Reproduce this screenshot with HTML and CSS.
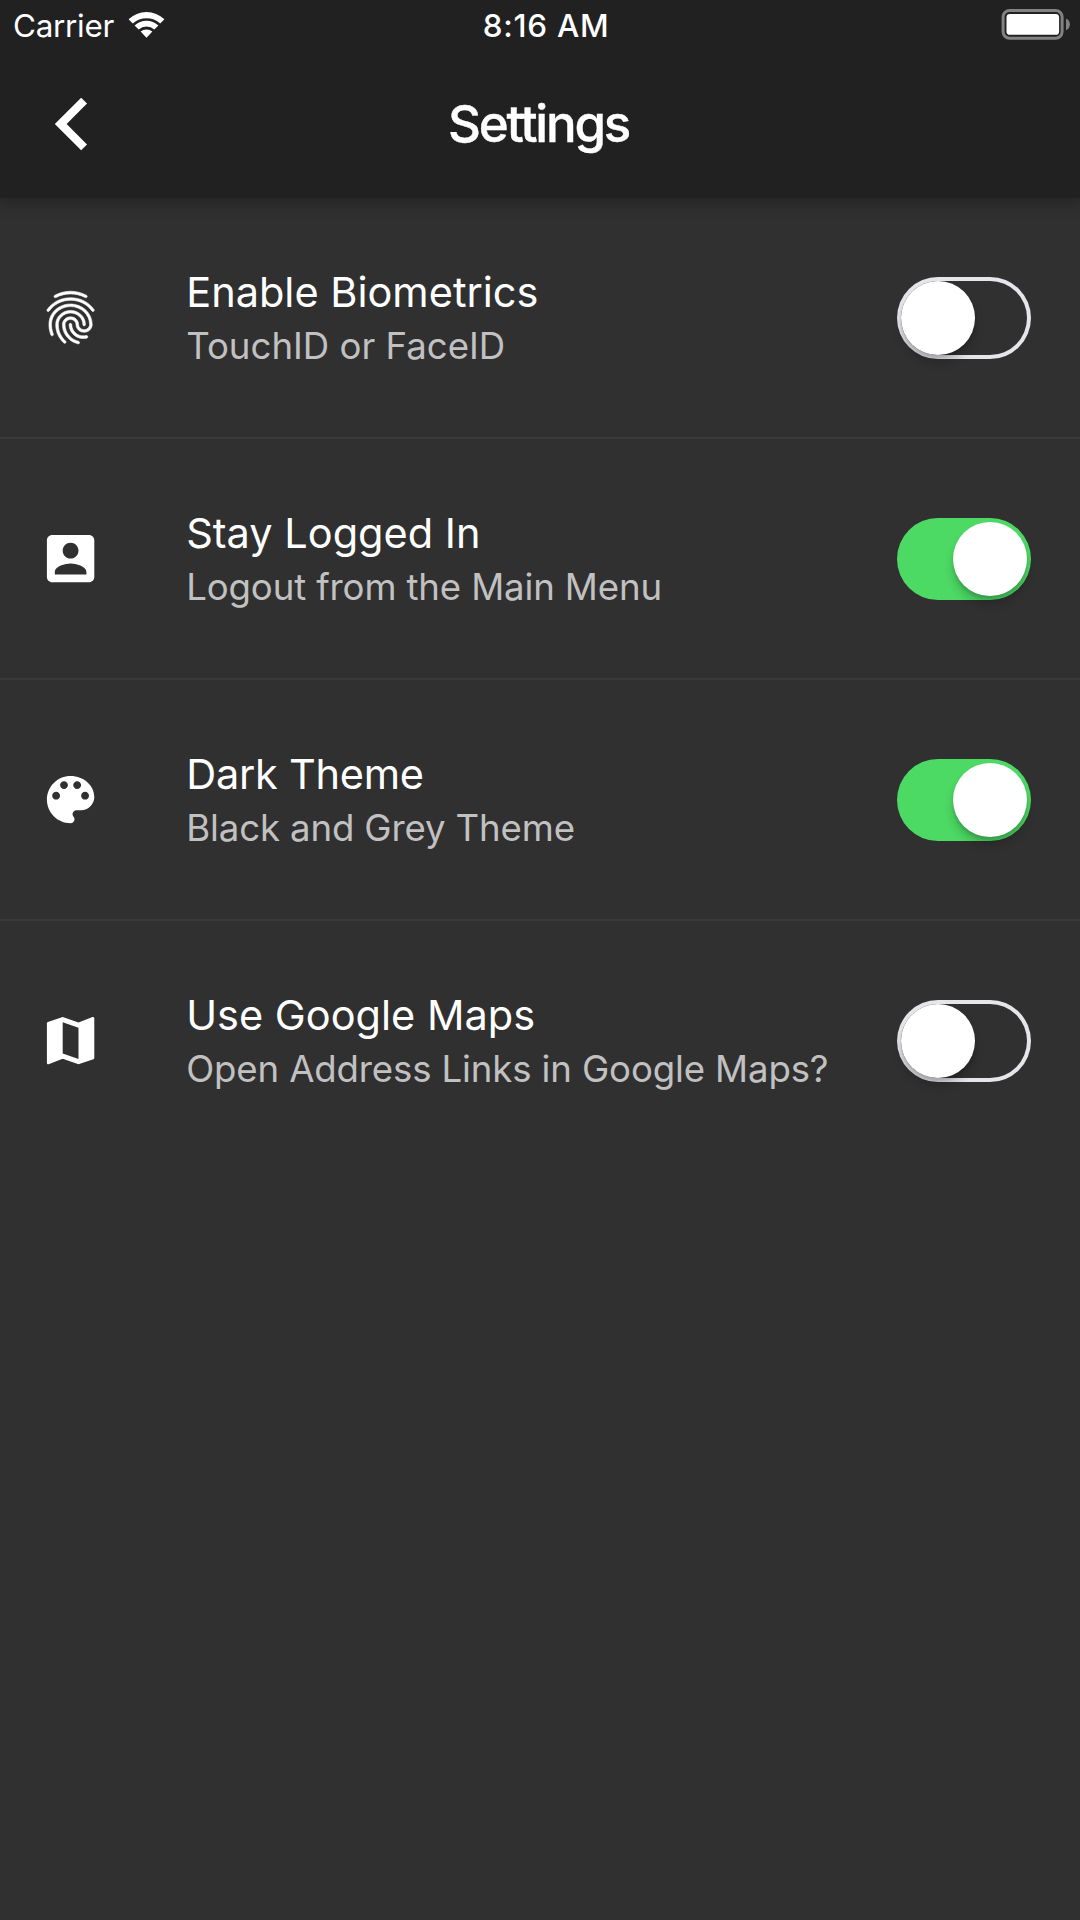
FILE: index.html
```html
<!DOCTYPE html>
<html lang="en">
<head>
<meta charset="utf-8">
<title>Settings</title>
<link rel="stylesheet" href="styles.css">
</head>
<body>
<header class="app-bar">
  <div class="status-bar">
    <div class="status-left">
      <span class="carrier">Carrier</span>
      <svg class="wifi" viewBox="0 0 37 28"><path d="M0.6 8.2A26 26 0 0 1 36.4 8.2L32.2 12.6A20 20 0 0 0 4.8 12.6ZM6.6 14.4A17.4 17.4 0 0 1 30.4 14.4L26.3 18.5A11.6 11.6 0 0 0 10.7 18.5ZM12.6 20.6A9 9 0 0 1 24.4 20.6L18.5 26.7Z"/></svg>
    </div>
    <span class="time">8:16 AM</span>
    <div class="status-right">
      <svg class="battery" viewBox="0 0 70 32"><rect class="battery-case" x="3.1" y="1.5" width="59" height="27.8" rx="6.5"/><rect class="battery-level" x="6.5" y="5" width="52.6" height="20.8" rx="3.4"/><path class="battery-tip" d="M66 9.8C71.2 11.3 71.2 19.7 66 21.2Z"/></svg>
    </div>
  </div>
  <div class="toolbar">
    <svg class="back" viewBox="0 0 34 54"><path d="M30.100 3.600 6.700 27 30.100 50.400"/></svg>
    <h1 class="page-title">Settings</h1>
  </div>
</header>
<main class="settings">
  <section class="row">
    <svg class="icon fingerprint" viewBox="0 0 24 24"><path d="M17.81 4.47c-.08 0-.16-.02-.23-.06C15.66 3.42 14 3 12.01 3c-1.98 0-3.86.47-5.57 1.41-.24.13-.54.04-.68-.2-.13-.24-.04-.55.2-.68C7.82 2.52 9.86 2 12.01 2c2.13 0 3.99.47 6.03 1.52.25.13.34.43.21.67-.09.18-.26.28-.44.28zM3.5 9.72c-.1 0-.2-.03-.29-.09-.23-.16-.28-.47-.12-.7.99-1.4 2.25-2.5 3.75-3.27C9.98 4.04 14 4.03 17.15 5.65c1.5.77 2.76 1.86 3.75 3.25.16.22.11.54-.12.7-.23.16-.54.11-.7-.12-.9-1.26-2.04-2.25-3.39-2.94-2.87-1.47-6.54-1.47-9.4.01-1.36.7-2.5 1.7-3.4 2.96-.08.14-.23.21-.39.21zm6.25 12.07c-.13 0-.26-.05-.35-.15-.87-.87-1.34-1.43-2.01-2.64-.69-1.23-1.05-2.73-1.05-4.34 0-2.97 2.54-5.39 5.66-5.39s5.66 2.42 5.66 5.39c0 .28-.22.5-.5.5s-.5-.22-.5-.5c0-2.42-2.09-4.39-4.66-4.39-2.57 0-4.66 1.97-4.66 4.39 0 1.44.32 2.77.93 3.85.64 1.15 1.08 1.64 1.85 2.42.19.2.19.51 0 .71-.11.1-.24.15-.37.15zm7.17-1.85c-1.19 0-2.24-.3-3.1-.89-1.49-1.01-2.38-2.65-2.38-4.39 0-.28.22-.5.5-.5s.5.22.5.5c0 1.41.72 2.74 1.94 3.56.71.48 1.54.71 2.54.71.24 0 .64-.03 1.04-.1.27-.05.53.13.58.41.05.27-.13.53-.41.58-.57.11-1.07.12-1.21.12zM14.91 22c-.04 0-.09-.01-.13-.02-1.59-.44-2.63-1.03-3.72-2.1-1.4-1.39-2.17-3.24-2.17-5.22 0-1.62 1.38-2.94 3.08-2.94 1.7 0 3.08 1.32 3.08 2.94 0 1.07.93 1.94 2.08 1.94s2.08-.87 2.08-1.94c0-3.77-3.25-6.83-7.25-6.83-2.84 0-5.44 1.58-6.61 4.03-.39.81-.59 1.76-.59 2.8 0 .78.07 2.01.67 3.61.1.26-.03.55-.29.64-.26.1-.55-.04-.64-.29-.49-1.31-.73-2.61-.73-3.96 0-1.2.23-2.29.68-3.24 1.33-2.79 4.28-4.6 7.51-4.6 4.55 0 8.25 3.51 8.25 7.83 0 1.62-1.38 2.94-3.08 2.94s-3.08-1.32-3.08-2.94c0-1.07-.93-1.94-2.08-1.94s-2.08.87-2.08 1.94c0 1.71.66 3.31 1.87 4.51.95.94 1.86 1.46 3.27 1.85.27.07.42.35.35.61-.05.23-.26.38-.47.38z"/></svg>
    <div class="labels">
      <div class="title">Enable Biometrics</div>
      <div class="subtitle">TouchID or FaceID</div>
    </div>
    <div class="switch"><div class="thumb"></div></div>
  </section>
  <section class="row">
    <svg class="icon" viewBox="0 0 24 24"><path d="M3 5v14c0 1.1.89 2 2 2h14c1.1 0 2-.9 2-2V5c0-1.1-.9-2-2-2H5c-1.11 0-2 .9-2 2zm12 4c0 1.66-1.34 3-3 3s-3-1.34-3-3 1.34-3 3-3 3 1.34 3 3zm-9 8c0-2 4-3.100 6-3.100s6 1.100 6 3.100v1H6v-1z"/></svg>
    <div class="labels">
      <div class="title">Stay Logged In</div>
      <div class="subtitle snug">Logout from the Main Menu</div>
    </div>
    <div class="switch on"><div class="thumb"></div></div>
  </section>
  <section class="row">
    <svg class="icon" viewBox="0 0 24 24"><path d="M12 3c-4.970 0-9 4.030-9 9s4.030 9 9 9c.83 0 1.500-.67 1.500-1.500 0-.39-.15-.74-.39-1.010-.23-.26-.38-.61-.38-.99 0-.83.67-1.500 1.500-1.500H16c2.760 0 5-2.240 5-5 0-4.420-4.030-8-9-8zm-5.500 9c-.83 0-1.500-.67-1.500-1.500S5.670 9 6.500 9 8 9.670 8 10.500 7.330 12 6.500 12zm3-4C8.670 8 8 7.330 8 6.500S8.670 5 9.500 5s1.500.67 1.500 1.500S10.330 8 9.500 8zm5 0c-.83 0-1.500-.67-1.500-1.500S13.670 5 14.500 5s1.500.67 1.500 1.500S15.330 8 14.500 8zm3 4c-.83 0-1.500-.67-1.500-1.500S16.670 9 17.500 9s1.500.67 1.500 1.500-.67 1.500-1.500 1.500z"/></svg>
    <div class="labels">
      <div class="title tight">Dark Theme</div>
      <div class="subtitle snug">Black and Grey Theme</div>
    </div>
    <div class="switch on"><div class="thumb"></div></div>
  </section>
  <section class="row">
    <svg class="icon" viewBox="0 0 24 24"><path d="M20.500 3l-.16.030L15 5.100 9 3 3.360 4.900c-.21.070-.36.250-.36.480V20.500c0 .28.220.5.500.5l.16-.030L9 18.900l6 2.100 5.640-1.900c.21-.070.360-.25.360-.48V3.500c0-.28-.22-.5-.5-.5zM15 19l-6-2.110V5l6 2.110V19z"/></svg>
    <div class="labels">
      <div class="title">Use Google Maps</div>
      <div class="subtitle snug">Open Address Links in Google Maps?</div>
    </div>
    <div class="switch"><div class="thumb"></div></div>
  </section>
</main>
</body>
</html>
```
FILE: styles.css
```css
* {
  box-sizing: border-box;
}

body {
  margin: 0;
  min-height: 1920px;
  background: #303030;
  color: #fff;
  font-family: Inter, "Liberation Sans", sans-serif;
}

.app-bar {
  height: 198px;
  background: #212121;
  box-shadow: 0 5px 14px rgba(0, 0, 0, 0.28);
}

.status-bar {
  display: grid;
  grid-template-columns: 1fr auto 1fr;
  align-items: center;
  height: 50px;
  padding: 0 10px 0 13px;
  font-size: 31.4px;
  line-height: 48px;
}

.status-left {
  display: flex;
  align-items: center;
  gap: 14px;
}

.status-right {
  display: flex;
  justify-content: flex-end;
  padding-bottom: 1px;
}

.carrier {
  padding-top: 1px;
  letter-spacing: -0.28px;
}

.time {
  margin-left: 9px;
  padding-top: 1px;
  font-weight: 500;
  letter-spacing: 0.76px;
}

.wifi {
  width: 37px;
  height: 28px;
  margin-bottom: 1px;
  fill: #fff;
}

.battery {
  width: 70px;
  height: 32px;
}

.battery-case {
  fill: none;
  stroke: #828282;
  stroke-width: 3;
}

.battery-level {
  fill: #fff;
}

.battery-tip {
  fill: #828282;
}

.toolbar {
  display: grid;
  grid-template-columns: 1fr auto 1fr;
  align-items: center;
  height: 148px;
  padding: 0 54px;
}

.back {
  width: 34px;
  height: 54px;
  fill: none;
  stroke: #fff;
  stroke-width: 8.3;
}

.page-title {
  margin: 0 3px 0 0;
  font-size: 51px;
  font-weight: 500;
  line-height: 64px;
  letter-spacing: -2.2px;
  -webkit-text-stroke: 0.4px #fff;
}

.row {
  display: flex;
  align-items: center;
  height: 241px;
  padding: 0 49.5px 0 39px;
  border-bottom: 2px solid #393939;
}

.row:last-child {
  border-bottom-color: transparent;
}

.icon {
  width: 63.2px;
  height: 63.2px;
  fill: #fff;
}

.fingerprint {
  stroke: #fff;
  stroke-width: 0.22;
}

.labels {
  flex: 1;
  margin-left: 84px;
  padding-top: 2px;
  white-space: nowrap;
}

.title {
  font-size: 41.5px;
  line-height: 54px;
}

.title.tight {
  letter-spacing: -0.25px;
}

.subtitle {
  color: #c1c1c1;
  font-size: 36.6px;
  line-height: 54px;
}

.subtitle.snug {
  letter-spacing: -0.13px;
}

.switch {
  display: flex;
  width: 134px;
  height: 82px;
  padding: 4px;
  border-radius: 41px;
  box-shadow: inset 0 0 0 4px #e5e5ea;
}

.switch.on {
  justify-content: flex-end;
  background: #4cd964;
  box-shadow: none;
}

.thumb {
  width: 74px;
  height: 74px;
  border-radius: 50%;
  background: #fff;
  box-shadow: 0 8px 10px rgba(0, 0, 0, 0.18), 0 3px 3px rgba(0, 0, 0, 0.12);
}
```
